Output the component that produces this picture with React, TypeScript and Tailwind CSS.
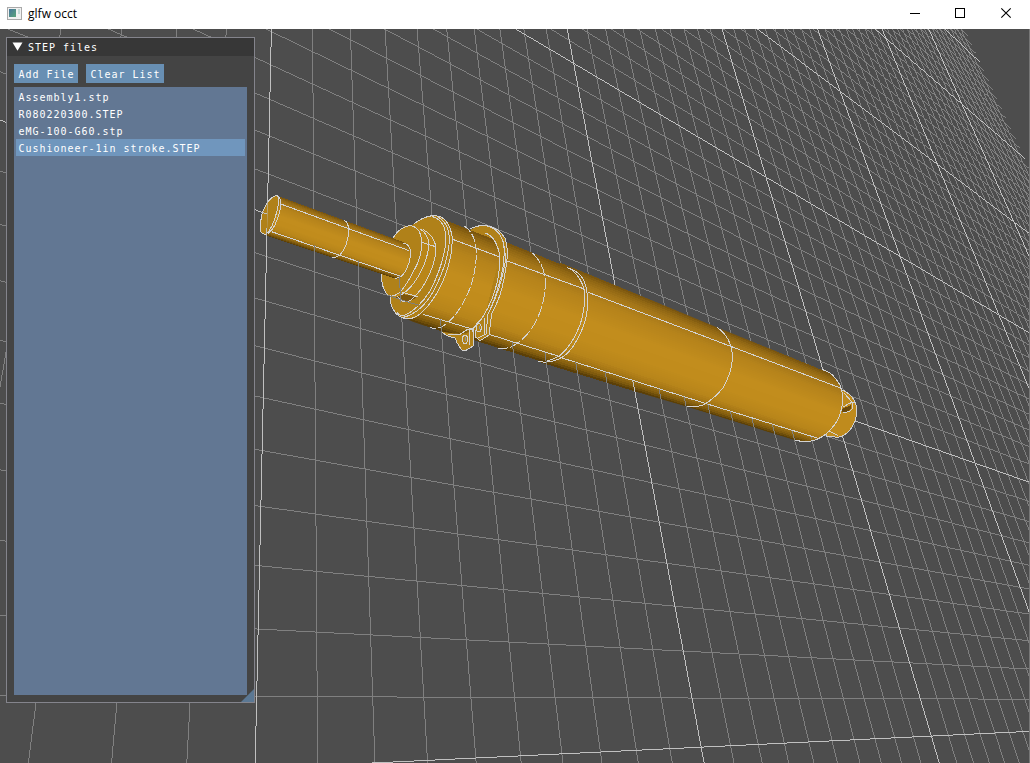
import React from "react";

type Pt = [number, number];

const LEFT = 0;
const TOP = 29;
const RIGHT = 1029;
const BOTTOM = 763;

/* Ground plane: i = 22 * L1 / L0 and j = 19.32 * L2 / L0 */
type Line = [number, number, number];
const L0: Line = [-1, 0.6455, 1218 - 0.6455 * 29];
const L1: Line = [1, 0.0221, -271.4 - 0.0221 * 29];
const L2: Line = [-0.0482, -1, 750.1 + 0.0482 * 640];
const at = (l: Line, x: number, y: number) => l[0] * x + l[1] * y + l[2];
const mix = (k: number, l: Line, n: number): Line => [
  k * l[0] - n * L0[0],
  k * l[1] - n * L0[1],
  k * l[2] - n * L0[2],
];

function rasterColumn(n: number): string {
  const [a, b, c] = mix(22, L1, n);
  let d = "";
  let run = TOP;
  let prev = NaN;
  for (let y = TOP; y <= BOTTOM; y++) {
    const x = y < BOTTOM ? Math.floor(-(b * (y + 0.5) + c) / a) : NaN;
    if (x !== prev) {
      if (prev >= LEFT && prev < RIGHT) d += `M${prev} ${run}h1v${y - run}h-1z`;
      run = y;
      prev = x;
    }
  }
  return d;
}

function rasterRow(n: number): string {
  const [a, b, c] = mix(19.32, L2, n);
  let d = "";
  let run = LEFT;
  let prev = NaN;
  for (let x = LEFT; x <= RIGHT; x++) {
    let y = NaN;
    if (x < RIGHT) {
      const yy = -(a * (x + 0.5) + c) / b;
      const depth = at(L0, x, yy);
      if (depth > 0 && (22 * at(L1, x, yy)) / depth <= 60) y = Math.floor(yy);
    }
    if (y !== prev) {
      if (prev >= TOP && prev < BOTTOM) d += `M${run} ${prev}h${x - run}v1h${run - x}z`;
      run = x;
      prev = y;
    }
  }
  return d;
}

let minor = "";
let major = "";
for (let i = -12; i < 60; i++) {
  if (i % 10 === 0) major += rasterColumn(i);
  else minor += rasterColumn(i);
}
for (let j = -3; j < 64; j++) {
  if (j % 10 === 0) major += rasterRow(j);
  else minor += rasterRow(j);
}

const Grid = () => (
  <g shapeRendering="crispEdges">
    <path d={minor} fill="#808080" />
    <path d={major} fill="#c0c0c0" />
  </g>
);

/* Shading across a cylinder, from its upper edge to its lower one */
const SHADE: [number, number, number, number][] = [
  [0, 118, 82, 14],
  [0.05, 142, 101, 19],
  [0.12, 165, 118, 25],
  [0.25, 182, 132, 27],
  [0.45, 194, 141, 29],
  [0.65, 193, 140, 28],
  [0.8, 184, 133, 26],
  [0.88, 163, 117, 21],
  [0.95, 126, 89, 13],
  [1, 82, 56, 5],
];
function shade(t: number): string {
  let k = 0;
  while (k < SHADE.length - 2 && t > SHADE[k + 1][0]) k++;
  const p = SHADE[k];
  const q = SHADE[k + 1];
  const f = (t - p[0]) / (q[0] - p[0]);
  const c = [1, 2, 3].map((m) => Math.round(p[m] + (q[m] - p[m]) * f));
  return `rgb(${c[0]},${c[1]},${c[2]})`;
}
const lerp = (a: Pt, b: Pt, t: number): Pt => [a[0] + (b[0] - a[0]) * t, a[1] + (b[1] - a[1]) * t];

function Tube({ a, b, c, d, clip }: { a: Pt; b: Pt; c: Pt; d: Pt; clip?: string }) {
  const n = 48;
  const bands = [];
  for (let k = 0; k < n; k++) {
    const pts = [
      lerp(a, d, k / n),
      lerp(b, c, k / n),
      lerp(b, c, Math.min(1, (k + 1.6) / n)),
      lerp(a, d, Math.min(1, (k + 1.6) / n)),
    ];
    bands.push(<polygon key={k} points={pts.join(" ")} fill={shade((k + 0.5) / n)} />);
  }
  return <g clipPath={clip}>{bands}</g>;
}

const FACE = "#b08119";

const Model = () => (
  <g shapeRendering="crispEdges">
    <defs>
      <clipPath id="main">
        <path d="M560 262 L716.7 327.3 L821.7 369.3 Q831 372 835 378 Q841 384 842.5 393 Q843.5 408 836.7 423 Q829 434 823 436 Q815 442 804 441.7 L793 439.5 L686.7 406.5 L540 364Z" />
      </clipPath>
      <clipPath id="third">
        <path d="M480 230 L570 267.7 Q583 272 586 284 Q591 296 586.7 316.7 Q582 332 576.7 340 Q570 352 563 356.7 Q555 364 540 362 L470 339Z" />
      </clipPath>
      <clipPath id="below">
        <path d="M252 190H268L267 234L271 232L331 250L395 274.5L404 277L404 297L419 301L419 309L385 297L396 279L266 236L252 236ZM423 314L473 329L473 352L411 322ZM489 334.5L560 357L700 402L815 438L795 442L686 408L546 365L478 344Z" />
      </clipPath>
    </defs>

    <path d="M842 390 Q846 391 851.7 396.7 Q855 400 856 405 V417 Q855 423 850 430 Q845 436 838 437.3 L826 436Z" fill="#bf8b1d" stroke="#d0d0d0" />
    <path d="M842 409 L851 405 L851 409 L847 412 L842 412Z" fill="#6b4a0c" />
    <Tube a={[560, 262.5]} b={[872, 390.5]} c={[848, 457]} d={[536, 361]} clip="url(#main)" />
    <Tube a={[480, 231.5]} b={[592, 277]} c={[568, 370]} d={[456, 334.5]} clip="url(#third)" />

    <path d="M470 230 Q476 226 485 225.3 Q498 226 505 238.3 Q508 246 507.3 256 Q507 270 503 285 Q498 302 491.7 313.3 L489 335 L480 340.7 L476 338 V330 L440 326Z" fill={FACE} />
    <path d="M442 331.7 Q447 338 455 337.7 L457 342.7 L461.7 350 L465 351 L473 346 V329 L440 320Z" fill={FACE} />
    <Tube a={[432, 215]} b={[503, 243]} c={[478, 343]} d={[400, 318]} clip="url(#second)" />
    <clipPath id="second">
      <path d="M430 214 L440 217 L470 230 L485 233 Q492 236 496 245 Q502 258 499 276.7 Q494 300 483 316.7 Q479 324 473 329 L467 333 L460 334 L443 332 L413 321.7 L400 316Z" />
    </clipPath>

    <path d="M411 226 Q420 217 431.7 215.7 Q445 215 451 230 Q454 241 451 256 Q447 276 436.7 293.3 Q426 312 415 318 Q403 322 395 313 Q390 306 390 296.7Z" fill={FACE} />
    <path d="M404 226 H413 Q426 228 433 237 Q438 247 434 262 Q430 282 416 297 Q407 305 394 297Z" fill="#b98619" />
    <path d="M396 297.5 L403 294 L417 297 Q410 302 403 301Z" fill="#7d560f" />
    <path d="M393 238 Q400 226 411 225.5 Q421 228 421.7 241 Q422 258 413 272 Q406 286 400 292 Q392 299 386.7 294 Q381 286 381.7 274Z" fill={FACE} />

    <Tube a={[276.7, 195.5]} b={[414, 246]} c={[404, 281.6]} d={[265, 235.3]} clip="url(#rod)" />
    <clipPath id="rod">
      <path d="M276 194 L345 219.5 L402 241 Q409 243 411 253 Q410 262 407 268 L400 278 L395 279 L264 236Z" />
    </clipPath>
    <path d="M277 195.5 Q268 197 262 214 Q260 222 260.3 230 Q261 234 266 234.5 Q275 226 279 206 Q280 197 277 195.5Z" fill={FACE} />

    <g fill="none" stroke="#d2d2d2" strokeWidth="1">
      <path d="M277 195.5 Q268 197 262 214 Q260 222 260.3 230 Q261 234 266 234.5 Q273 228 277 211 Q280 198 277 195.5" />
      <path d="M277 195.5 Q283 198 280 210 Q276 228 268 233.5" />
      <path d="M280.7 204 L409.3 250.7 M271.7 231.7 L401.7 276.7" />
      <path d="M344 220 Q349 223 348.7 231 Q348 246 340 255 Q336 258 332.3 257.5" />
      <path d="M403 243 Q410 244 411 253 Q410 262 407 268 Q404 275 400 277 L395 278.5" />
      <path d="M393 238 Q400 226 411 225.5 Q421 228 421.7 241 Q422 258 413 272 Q406 286 400 292 Q392 299 386.7 294 Q381 286 381.7 274" />
      <path d="M420 229 Q428 233 429 245 Q427 262 418 276.7 Q411 289 401 295" />
      <path d="M423 229.5 Q434 235 436 247 Q436 260 430 273 Q423 290 411 300 Q403 305 397 296" />
      <path d="M421.7 242.3 L435.7 246.7 M402 292 L418 297" />
      <path d="M414 224 Q422 217 433 215.5 L440 216.3 Q450 221 452 236 Q453 250 448 267 Q444 281 436.7 293.3 Q428 308 418 315.5 Q406 323 396 313.5 Q390 306 390 296.7" />
      <path d="M432 216.5 Q446 220 446 240 Q444 264 430 291 Q418 310 403 316 Q398 315 397 312" />
      <path d="M438 217 Q449 223 449.5 240 Q448 264 433 292 Q421 313 403 317.5" />
      <path d="M452.7 239.3 L499 256.7 M423 314.3 L473 329.3" />
      <path d="M464 226 Q476 233 476.3 254 Q476 274 468 293 Q457 318 441.7 326.7 Q436 329 430 327.7" strokeDasharray="9 2" />
      <path d="M470 229 Q476 225.5 485 225.3 Q499 227 505 238.3 Q508 247 507.3 257 Q505 279 500 295 Q496 306 491.7 313.3 L489 335 L480 340.7 L475.5 337 V330" />
      <path d="M485 233 Q495 236 499 252 Q501 265 497 283 Q493 300 484 315 Q479 324 472 329" />
      <path d="M487 226 Q499 229 503.5 242 Q506 262 499 284 Q494 302 488 314 L486 334 L478 338" />
      <path d="M495 229 Q507 240 505 263 Q501 287 491 308" />
      <path d="M442 332 Q447 337 455 337.7 L457 342.7 L461.7 350 L465 351 L473 346 V330 L468 329 L460 334.3 H448" />
      <path d="M469 330 V345" />
      <ellipse cx="465" cy="339.3" rx="2.5" ry="4.2" />
      <path d="M465 337v4" stroke="#8f959c" />
      <ellipse cx="478.7" cy="327.7" rx="2.5" ry="4.2" />
      <path d="M479 326v3" stroke="#8f959c" />
      <path d="M472 332 Q477 322 483 317 M484 318 V335" />
      <path d="M507.3 261 L585 289.3 M489 334.3 L560 356.7" />
      <path d="M532.7 253.3 Q544 264 545.5 281 Q545 302 538 317 Q529 337 513 346 Q506 349.5 498 348.3" strokeDasharray="12 2" />
      <path d="M567 267.7 Q580 271 584 281 Q590 296 586.7 314 Q584 328 577 340 Q570 353 561 358 Q549 364 538 361.3" />
      <path d="M570 268.5 Q582 277 584.5 292 Q585.5 309 580 325 Q573 344 560 355.5 Q554 359 546 361.5" />
      <path d="M588 292.3 L731.7 346.7 L841.7 388.5 M560 357.3 L705 403.3 L817 438" />
      <path d="M716.7 327.3 Q732 337 732.5 358 Q732 372 723 388 Q713 400 703 405 Q699 407 687 406.3" />
      <path d="M821.7 369.3 Q831 372 835 378 Q841 384 842.3 393 V404 Q841 418 832 428 Q823 439 810 441.3 Q801 442 795 440" />
      <path d="M844 393 L852.5 402.5 L856 403 M843 407 L849 403.5 L852 402.5 V409 Q849 413 843 412" />
      <path d="M842 406 Q840 421 829 431 L838 435.5" />
    </g>
    <g clipPath="url(#below)">
      <path d={minor} fill="#80807c" />
      <path d={major} fill="#c0c0c0" />
    </g>
  </g>
);

const FILES = ["Assembly1.stp", "R080220300.STEP", "eMG-100-G60.stp", "Cushioneer-1in stroke.STEP"];

const MONO = "font-['DejaVu_Sans_Mono',monospace] text-[10px] tracking-[0.98px] whitespace-pre text-white";

export default function App() {
  return (
    <div className="flex h-[763px] w-[1030px] flex-col overflow-hidden bg-[#4d4d4d]">
      <header className="flex h-[29px] shrink-0 items-center bg-white pl-[7px]">
        <svg width="15" height="13" viewBox="0 0 15 13" className="mb-[3px]" shapeRendering="crispEdges">
          <rect width="15" height="13" fill="#a9a9a9" />
          <rect x="1" y="1" width="13" height="11" fill="#f1f1f1" />
          <defs>
            <linearGradient id="app" x1="0" y1="0" x2="1" y2="1">
              <stop offset="0" stopColor="#47759c" />
              <stop offset="1" stopColor="#5aa57a" />
            </linearGradient>
          </defs>
          <rect x="2" y="2" width="7" height="8" fill="url(#app)" />
          <rect x="11" y="2" width="2" height="5" fill="#c3d9d6" />
        </svg>
        <span className="mb-px ml-[6px] font-['Open_Sans',sans-serif] text-[12px] leading-[16px] tracking-[0.02px] text-black">
          glfw occt
        </span>
        <svg width="110" height="12" viewBox="0 0 110 12" className="mr-[15px] mb-[3px] ml-auto">
          <g stroke="#000" fill="none">
            <path d="M5 6.5h10" shapeRendering="crispEdges" />
            <rect x="50.5" y="1.5" width="9" height="9" shapeRendering="crispEdges" />
            <path d="M96.3 1.3l9.4 9.4M105.7 1.3l-9.4 9.4" strokeWidth="1.1" />
          </g>
        </svg>
      </header>

      <main className="relative h-[734px] w-[1030px]">
        <svg className="block" width="1030" height="734" viewBox="0 29 1030 734">
          <Grid />
          <Model />
          <rect x="1029" y="29" width="1" height="734" fill="#777777" />
        </svg>

        <section className="absolute top-[8px] left-[6px] flex h-[666px] w-[249px] flex-col border border-[#84848c] bg-[#444444]">
          <div className="flex h-[18px] shrink-0 items-center bg-[#373737] pl-[5px]">
            <svg width="11" height="9" viewBox="0 0 11 9" className="mb-px">
              <path d="M0.5 0.5H10.5L5.5 8.8Z" fill="#fff" />
            </svg>
            <span className={`${MONO} ml-[5px] pt-[2px] leading-[18px]`}>STEP files</span>
          </div>
          <div className="flex gap-2 pt-2 pl-[7px]">
            <button className={`${MONO} h-[19px] w-16 bg-[#688fb3] pt-px pl-[4.5px] text-left leading-[19px]`}>Add File</button>
            <button className={`${MONO} h-[19px] w-[78px] bg-[#688fb3] pt-px pl-[4.5px] text-left leading-[19px]`}>Clear List</button>
          </div>
          <ul className="mt-1 ml-[7px] h-[608px] w-[233px] bg-[#627793] px-[2px] pt-[1px]">
            {FILES.map((name, k) => (
              <li
                key={name}
                className={`${MONO} h-[17px] pl-[2.5px] leading-[20px] ${k === 3 ? "bg-[#7096bd]" : ""}`}
              >
                {name}
              </li>
            ))}
          </ul>
          <svg className="absolute right-0 bottom-0" width="13" height="13" viewBox="0 0 13 13">
            <path d="M13 0V13H0Z" fill="#5b7894" />
          </svg>
        </section>
      </main>
    </div>
  );
}
